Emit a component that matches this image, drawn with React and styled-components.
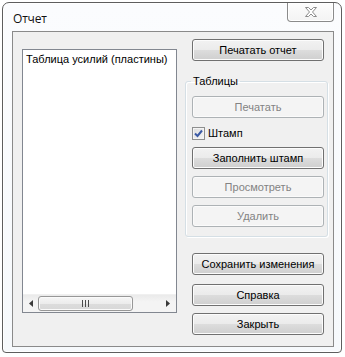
import React from "react";
import styled, { createGlobalStyle, css } from "styled-components";

const Global = createGlobalStyle`
  html, body { margin: 0; padding: 0; background: #ffffff; }
  body { font-family: "Liberation Sans", Arial, sans-serif; font-size: 11px; color: #000; }
`;

const Page = styled.div`
  width: 345px;
  height: 357px;
  padding: 2px 0 0 2px;
  box-sizing: border-box;
  background: #ffffff;
`;

const Frame = styled.div`
  width: 340px;
  height: 351px;
  box-sizing: border-box;
  border: 1px solid #5e5e5e;
  border-radius: 7px 7px 4px 4px;
  background: linear-gradient(180deg, #fbfcfe 0%, #f6f9fc 100%);
  box-shadow: inset 0 0 0 1px #ffffff;
  display: flex;
  flex-direction: column;
  padding: 0 7px 5px 9px;
`;

const TitleBar = styled.div`
  height: 28px;
  display: flex;
  align-items: flex-start;
  justify-content: space-between;
`;

const Title = styled.div`
  font-family: "Open Sans", "Liberation Sans", sans-serif;
  font-size: 12px;
  color: #111;
  padding: 7px 0 0 1px;
  letter-spacing: -0.2px;
`;

const CloseButton = styled.div`
  width: 47px;
  height: 19px;
  box-sizing: border-box;
  border: 1px solid #8b8b8b;
  border-top: none;
  border-radius: 0 0 4px 4px;
  background: linear-gradient(180deg, #fdfdfd 0%, #f3f3f3 100%);
  box-shadow: inset 0 0 0 1px #ffffff;
  display: flex;
  align-items: center;
  justify-content: center;
`;

const Client = styled.div`
  flex: 1;
  box-sizing: border-box;
  border: 1px solid #8a8a8a;
  background: #f0f0f0;
  display: flex;
  padding: 7px 0 0 9px;
  gap: 8px;
`;

const ListBox = styled.div`
  width: 155px;
  height: 264px;
  margin-top: 10px;
  box-sizing: border-box;
  border: 1px solid #828790;
  background: #ffffff;
  display: flex;
  flex-direction: column;
`;

const ListItems = styled.div`
  flex: 1;
  padding: 2px 3px;
`;

const ListItem = styled.div`
  height: 14px;
  line-height: 14px;
  white-space: nowrap;
`;

const HScroll = styled.div`
  height: 17px;
  display: flex;
  align-items: center;
  background: linear-gradient(180deg, #eaeaea 0%, #f4f4f4 40%, #f4f4f4 100%);
  border-top: 1px solid #f0f0f0;
  padding: 0 1px;
`;

const ScrollArrow = styled.div`
  width: 17px;
  height: 15px;
  display: flex;
  align-items: center;
  justify-content: center;
`;

const Track = styled.div`
  flex: 1;
  display: flex;
  height: 15px;
  padding-right: 28px;
`;

const Thumb = styled.div`
  width: 95px;
  height: 15px;
  box-sizing: border-box;
  border: 1px solid #979797;
  border-radius: 3px;
  background: linear-gradient(180deg, #f6f6f6 0%, #ececec 50%, #dcdcdc 50%, #d8d8d8 100%);
  box-shadow: inset 0 0 0 1px #fafafa;
  display: flex;
  align-items: center;
  justify-content: center;
`;

const Side = styled.div`
  width: 143px;
  display: flex;
  flex-direction: column;
`;

const Button = styled.div`
  width: 132px;
  height: 22px;
  box-sizing: border-box;
  margin: ${(p) => p.$mt || 0}px 0 0 ${(p) => (p.$inGroup ? 6 : 7)}px;
  border: 1px solid #707070;
  border-radius: 3px;
  display: flex;
  align-items: center;
  justify-content: center;
  white-space: nowrap;
  color: #000;
  background: linear-gradient(180deg, #f2f2f2 0%, #ebebeb 50%, #dddddd 50%, #cfcfcf 100%);
  box-shadow: inset 0 0 0 1px #fcfcfc;
  ${(p) =>
    p.$disabled &&
    css`
      border-color: #adb2b5;
      color: #838383;
      background: #f4f4f4;
      box-shadow: inset 0 0 0 1px #fbfbfb;
    `}
`;

const Group = styled.fieldset`
  margin: 13px 0 0 0;
  padding: 0 0 9px 0;
  width: 143px;
  box-sizing: border-box;
  border: 1px solid #d5dfe5;
  border-radius: 3px;
  box-shadow: inset 1px 1px 0 #ffffff, 1px 1px 0 #ffffff;
  display: flex;
  flex-direction: column;
  min-width: 0;
`;

const Legend = styled.legend`
  margin-left: 5px;
  padding: 0 2px;
  color: #000;
  line-height: 14px;
`;

const CheckRow = styled.label`
  display: flex;
  align-items: center;
  gap: 3px;
  margin: 7px 0 0 6px;
  height: 16px;
`;

const CheckBox = styled.span`
  width: 13px;
  height: 13px;
  box-sizing: border-box;
  border: 1px solid #8e8f8f;
  background: linear-gradient(135deg, #dcdcdc 0%, #f6f6f6 100%);
  box-shadow: inset 0 0 0 1px #f4f4f4;
  display: flex;
  align-items: center;
  justify-content: center;
`;

const CloseIcon = () => (
  <svg width="14" height="12" viewBox="0 0 14 12">
    <path
      d="M1.5 1.5 H4.5 L7 4 L9.5 1.5 H12.5 L8.5 6 L12.5 10.5 H9.5 L7 8 L4.5 10.5 H1.5 L5.5 6 Z"
      fill="#ffffff"
      stroke="#8c8c8c"
      strokeWidth="1"
      strokeLinejoin="round"
    />
  </svg>
);

const Arrow = ({ dir }) => (
  <svg width="4" height="7" viewBox="0 0 4 7">
    {dir === "left" ? (
      <path d="M4 0 L0 3.5 L4 7 Z" fill="#3a3a3a" />
    ) : (
      <path d="M0 0 L4 3.5 L0 7 Z" fill="#3a3a3a" />
    )}
  </svg>
);

const Grip = () => (
  <svg width="8" height="7" viewBox="0 0 8 7">
    <rect x="0" y="0" width="1" height="7" fill="#4a4a4a" />
    <rect x="3" y="0" width="1" height="7" fill="#4a4a4a" />
    <rect x="6" y="0" width="1" height="7" fill="#4a4a4a" />
  </svg>
);

const Check = () => (
  <svg width="9" height="9" viewBox="0 0 9 9">
    <path d="M1 4.5 L3.5 7 L8 1.5" fill="none" stroke="#3b5aa5" strokeWidth="2" />
  </svg>
);

export default function App() {
  return (
    <>
      <Global />
      <Page>
        <Frame>
          <TitleBar>
            <Title>Отчет</Title>
            <CloseButton>
              <CloseIcon />
            </CloseButton>
          </TitleBar>
          <Client>
            <ListBox>
              <ListItems>
                <ListItem>Таблица усилий (пластины)</ListItem>
              </ListItems>
              <HScroll>
                <ScrollArrow>
                  <Arrow dir="left" />
                </ScrollArrow>
                <Track>
                  <Thumb>
                    <Grip />
                  </Thumb>
                </Track>
                <ScrollArrow>
                  <Arrow dir="right" />
                </ScrollArrow>
              </HScroll>
            </ListBox>
            <Side>
              <Button>Печатать отчет</Button>
              <Group>
                <Legend>Таблицы</Legend>
                <Button $inGroup $disabled $mt={8}>Печатать</Button>
                <CheckRow>
                  <CheckBox>
                    <Check />
                  </CheckBox>
                  Штамп
                </CheckRow>
                <Button $inGroup $mt={6}>Заполнить штамп</Button>
                <Button $inGroup $disabled $mt={7}>Просмотреть</Button>
                <Button $inGroup $disabled $mt={7}>Удалить</Button>
              </Group>
              <Button $mt={16}>Сохранить изменения</Button>
              <Button $mt={9}>Справка</Button>
              <Button $mt={7}>Закрыть</Button>
            </Side>
          </Client>
        </Frame>
      </Page>
    </>
  );
}
